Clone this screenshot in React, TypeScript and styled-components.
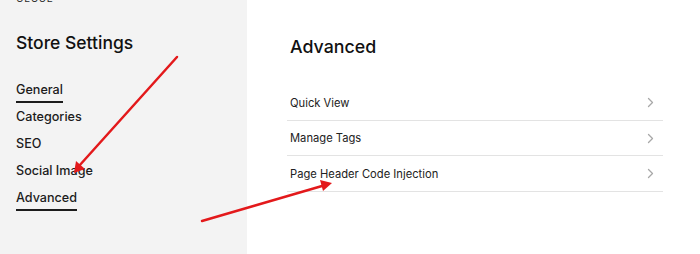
import React from "react";
import styled, { createGlobalStyle } from "styled-components";

const Global = createGlobalStyle`
  html, body { margin: 0; padding: 0; background: #ffffff; }
  body { font-family: Inter, "Liberation Sans", Arial, sans-serif; color: #1f1f1f; }
  * { box-sizing: border-box; }
`;

const Page = styled.div`
  position: relative;
  display: flex;
  width: 700px;
  height: 254px;
  overflow: hidden;
  background: #ffffff;
`;

const Sidebar = styled.aside`
  width: 247px;
  flex: none;
  background: #f3f3f3;
  padding: 0 0 0 16px;
  display: flex;
  flex-direction: column;
`;

const CloseLink = styled.div`
  margin-top: -8px;
  font-size: 10px;
  line-height: 12px;
  letter-spacing: 1px;
  text-transform: uppercase;
  color: #2a2a2a;
`;

const SideTitle = styled.h1`
  margin: 27px 0 0;
  font-size: 17.5px;
  line-height: 24px;
  font-weight: 500;
  color: #111;
`;

const Nav = styled.nav`
  margin-top: 27px;
  display: flex;
  flex-direction: column;
`;

const NavItem = styled.div`
  height: 27px;
  display: flex;
  align-items: flex-start;
`;

const NavLabel = styled.span<{ $active?: boolean }>`
  font-size: 12.6px;
  line-height: 16px;
  font-weight: 500;
  color: #1c1c1c;
  padding-bottom: 2.5px;
  border-bottom: 2px solid ${(p) => (p.$active ? "#1c1c1c" : "transparent")};
`;

const Main = styled.main`
  flex: 1;
  padding: 0 0 0 40px;
  display: flex;
  flex-direction: column;
`;

const Heading = styled.h2`
  margin: 36px 0 0 3px;
  font-size: 17.8px;
  line-height: 22px;
  font-weight: 500;
  color: #111;
`;

const List = styled.div`
  margin-top: 27px;
  width: 376px;
  display: flex;
  flex-direction: column;
`;

const Row = styled.div`
  height: 35.5px;
  display: flex;
  align-items: center;
  justify-content: space-between;
  padding: 1px 9px 0 3px;
  border-bottom: 1px solid #e3e3e3;
  font-size: 11.2px;
  color: #222;
`;

const Chevron = () => (
  <svg width="7" height="11" viewBox="0 0 7 11" fill="none">
    <path d="M1.5 1.5 L5.5 5.5 L1.5 9.5" stroke="#a8a8a8" strokeWidth="1.3" strokeLinecap="round" strokeLinejoin="round" />
  </svg>
);

const Annotations = styled.svg`
  position: absolute;
  left: 0;
  top: 0;
  pointer-events: none;
`;

const navItems = [
  { label: "General", active: true },
  { label: "Categories" },
  { label: "SEO" },
  { label: "Social Image" },
  { label: "Advanced", active: true },
];

const rows = ["Quick View", "Manage Tags", "Page Header Code Injection"];

export default function App() {
  return (
    <Page>
      <Global />
      <Sidebar>
        <CloseLink>Close</CloseLink>
        <SideTitle>Store Settings</SideTitle>
        <Nav>
          {navItems.map((n) => (
            <NavItem key={n.label}>
              <NavLabel $active={n.active}>{n.label}</NavLabel>
            </NavItem>
          ))}
        </Nav>
      </Sidebar>
      <Main>
        <Heading>Advanced</Heading>
        <List>
          {rows.map((r) => (
            <Row key={r}>
              <span>{r}</span>
              <Chevron />
            </Row>
          ))}
        </List>
      </Main>
      <Annotations width="700" height="254" viewBox="0 0 700 254">
        <g stroke="#e3191b" strokeWidth="2.5" strokeLinecap="round" fill="none">
          <line x1="177" y1="57" x2="79" y2="166" />
          <line x1="202" y1="221" x2="322" y2="186" />
        </g>
        <g fill="#e3191b">
          <polygon points="74,173 76,161 85,169" />
          <polygon points="332,183 320,180 323,191" />
        </g>
      </Annotations>
    </Page>
  );
}
